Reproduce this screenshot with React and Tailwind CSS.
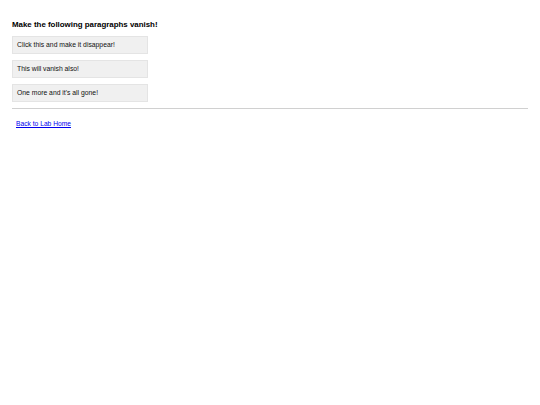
import React from 'react';

const items = [
  'Click this and make it disappear!',
  'This will vanish also!',
  "One more and it's all gone!",
];

const App = () => {
  return (
    <div className="min-h-screen bg-white px-3 pt-[20px] font-['Liberation_Sans',Arial,sans-serif] text-black">
      <h3 className="text-[7.9px] font-bold leading-[10px]">Make the following paragraphs vanish!</h3>

      <div className="mt-[6px] flex flex-col gap-[6px]">
        {items.map((t) => (
          <p
            key={t}
            className="flex h-[18px] w-[136px] items-center border border-[#e4e4e4] bg-[#f0f0f0] px-[4px] text-[6.8px] leading-none text-[#111]"
          >
            {t}
          </p>
        ))}
      </div>

      <hr className="mt-[6px] w-[516px] border-t border-[#d0d0d0]" />

      <div className="mt-[11px] pl-1 text-[6.7px] leading-[8px]">
        <a href="#" className="text-[#0000ee] underline">Back to Lab Home</a>
      </div>
    </div>
  );
};

export default App;
